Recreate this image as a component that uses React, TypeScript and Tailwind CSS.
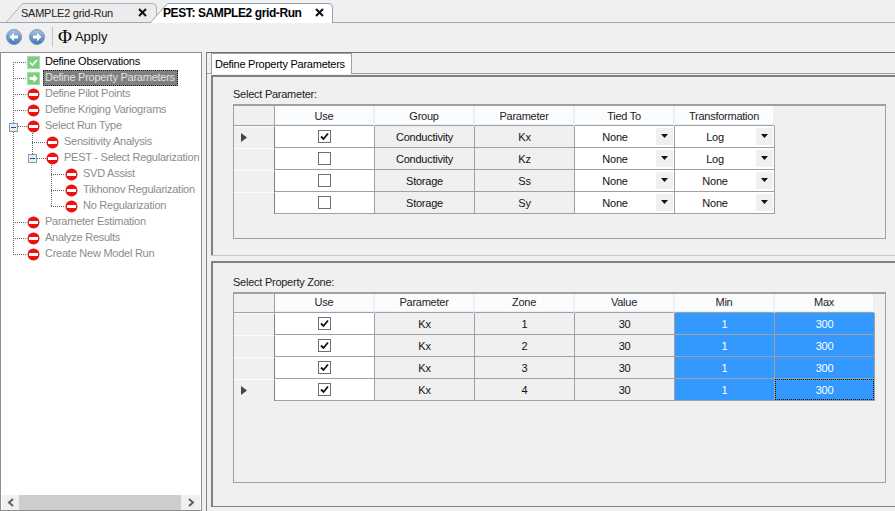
const font = "font-['Liberation_Sans',sans-serif]";

type TreeItem = { label: string; level: number; icon: "check" | "arrow" | "stop"; selected?: boolean; done?: boolean };

const treeItems: TreeItem[] = [
  { label: "Define Observations", level: 0, icon: "check", done: true },
  { label: "Define Property Parameters", level: 0, icon: "arrow", selected: true },
  { label: "Define Pilot Points", level: 0, icon: "stop" },
  { label: "Define Kriging Variograms", level: 0, icon: "stop" },
  { label: "Select Run Type", level: 0, icon: "stop" },
  { label: "Sensitivity Analysis", level: 1, icon: "stop" },
  { label: "PEST - Select Regularization", level: 1, icon: "stop" },
  { label: "SVD Assist", level: 2, icon: "stop" },
  { label: "Tikhonov Regularization", level: 2, icon: "stop" },
  { label: "No Regularization", level: 2, icon: "stop" },
  { label: "Parameter Estimation", level: 0, icon: "stop" },
  { label: "Analyze Results", level: 0, icon: "stop" },
  { label: "Create New Model Run", level: 0, icon: "stop" },
];

function TreeIcon({ kind }: { kind: TreeItem["icon"] }) {
  if (kind === "stop") {
    return (
      <svg width="13" height="13" viewBox="0 0 13 13" className="shrink-0">
        <circle cx="6.5" cy="6.5" r="6" fill="#ee1111" />
        <rect x="2" y="5" width="9" height="3" fill="#ffffff" />
      </svg>
    );
  }
  return (
    <svg width="13" height="13" viewBox="0 0 13 13" className="shrink-0">
      <rect x="0" y="0" width="13" height="13" fill="#79cf7d" />
      <rect x="0.5" y="0.5" width="12" height="12" fill="none" stroke="#a6e0a8" />
      {kind === "check" ? (
        <path d="M3 6.5 L5.5 9 L10 4" fill="none" stroke="#ffffff" strokeWidth="1.6" />
      ) : (
        <path d="M2.5 5 H6.5 V2.5 L10.8 6.5 L6.5 10.5 V8 H2.5 Z" fill="#ffffff" />
      )}
    </svg>
  );
}

function TreeLines() {
  // dotted connectors + expander boxes
  const dot = { stroke: "#666", strokeDasharray: "1 1", fill: "none" };
  const hLines = [
    [12, 61, 26], [12, 77, 26], [12, 93, 26], [12, 109, 26], [17, 125, 26],
    [31, 141, 45], [36, 157, 45], [50, 173, 64], [50, 189, 64], [50, 205, 64],
    [12, 221, 26], [12, 237, 26], [12, 253, 26],
  ];
  return (
    <svg width="90" height="270" viewBox="0 52 90 270" className="absolute left-0 top-0 pointer-events-none">
      <g {...dot}>
        <path d="M12.5 61 V253.5" />
        <path d="M31.5 130 V157" />
        <path d="M50.5 162 V205.5" />
        {hLines.map(([x1, y, x2]) => (
          <path key={`${x1}-${y}`} d={`M${x1} ${y + 0.5} H${x2}`} />
        ))}
      </g>
      {[[8, 122], [27, 153]].map(([x, y]) => (
        <g key={x}>
          <rect x={x + 0.5} y={y + 0.5} width="8" height="8" fill="#e8eef4" stroke="#8a9aa8" />
          <path d={`M${x + 2} ${y + 4.5} H${x + 7}`} stroke="#1f4e9c" />
        </g>
      ))}
    </svg>
  );
}

function Tree() {
  return (
    <div className="relative flex flex-col pt-[1px] flex-1 min-h-0 overflow-hidden">
      <TreeLines />
      {treeItems.map((item) => (
        <div
          key={item.label}
          className={`flex h-4 items-center shrink-0 ${
            item.level === 0 ? "pl-[26px]" : item.level === 1 ? "pl-[45px]" : "pl-[64px]"
          }`}
        >
          <TreeIcon kind={item.icon} />
          <span
            className={`ml-[3px] pl-[2px] pr-[3px] h-4 leading-[15px] whitespace-nowrap text-[11px] ${
              item.selected
                ? "bg-[#808080] text-[#e0e0e0] outline-1 outline-dotted outline-offset-[-1px] outline-[#222]"
                : item.done
                  ? "text-black"
                  : "text-[#8c8c8c]"
            }`}
          >
            {item.label}
          </span>
        </div>
      ))}
    </div>
  );
}

function ScrollBar() {
  return (
    <div className="flex h-[15px] bg-[#f0f0f0] items-stretch mx-[1px] shrink-0">
      <div className="w-[17px] flex items-center justify-center">
        <svg width="8" height="9" viewBox="0 0 8 9">
          <path d="M6 1 L2 4.5 L6 8" fill="none" stroke="#606060" strokeWidth="2" />
        </svg>
      </div>
      <div className="flex-1 bg-[#cdcdcd]" />
      <div className="w-[19px] flex items-center justify-center">
        <svg width="8" height="9" viewBox="0 0 8 9">
          <path d="M2 1 L6 4.5 L2 8" fill="none" stroke="#606060" strokeWidth="2" />
        </svg>
      </div>
    </div>
  );
}

function CloseX() {
  return (
    <svg width="9" height="9" viewBox="0 0 9 9" className="block">
      <path d="M1 1 L8 8 M8 1 L1 8" stroke="#111" strokeWidth="2" />
    </svg>
  );
}

function DocTabs() {
  return (
    <div className="relative h-[23px] shrink-0 bg-[#f0f0f0] border-b border-[#9aa7b5] flex">
      <div className="relative w-[157px] ml-[5px] h-[22px] shrink-0">
        <svg width="157" height="22" className="absolute left-0 top-0">
          <path d="M1.5 22 L17.5 3.5 H148 Q151 3.5 151.5 7 V22" fill="#ececec" stroke="#a9b4bf" />
        </svg>
        <span className="absolute left-[16px] top-[5px] text-[11px] leading-4 text-[#222] whitespace-nowrap">SAMPLE2 grid-Run</span>
        <span className="absolute left-[133px] top-[8px]"><CloseX /></span>
      </div>
      <div className="relative w-[185px] ml-[-13px] h-[23px] shrink-0">
        <svg width="185" height="23" className="absolute left-0 top-0">
          <path d="M1 23 L18.5 3.5 H179 Q183.5 3.5 183.5 8 V23" fill="#ffffff" stroke="#8ea3b6" />
        </svg>
        <span className="absolute left-[14px] top-[5px] text-[12px] leading-4 font-bold tracking-[-0.4px] text-black whitespace-nowrap">PEST: SAMPLE2 grid-Run</span>
        <span className="absolute left-[166px] top-[8px]"><CloseX /></span>
      </div>
    </div>
  );
}

function NavButton({ dir }: { dir: "back" | "next" }) {
  return (
    <svg width="16" height="16" viewBox="0 0 16 16" className="shrink-0 mt-[1px]">
      <defs>
        <linearGradient id={`nav-${dir}`} x1="0" y1="0" x2="0" y2="1">
          <stop offset="0" stopColor="#a9c6e6" />
          <stop offset="1" stopColor="#3f74b4" />
        </linearGradient>
      </defs>
      <circle cx="8" cy="8" r="7.5" fill={`url(#nav-${dir})`} stroke="#7f97b2" />
      {dir === "back" ? (
        <path d="M3.5 8 L8 3.8 V6.5 H12 V9.5 H8 V12.2 Z" fill="#ffffff" />
      ) : (
        <path d="M12.5 8 L8 3.8 V6.5 H4 V9.5 H8 V12.2 Z" fill="#ffffff" />
      )}
    </svg>
  );
}

function Toolbar() {
  return (
    <div className="h-[27px] shrink-0 flex items-center bg-[#f0f0f0] pl-[6px]">
      <NavButton dir="back" />
      <span className="w-[7px]" />
      <NavButton dir="next" />
      <span className="w-px h-[20px] bg-[#c4c4c4] ml-[7px] mr-[5px]" />
      <span className="font-['Liberation_Serif',serif] text-[19px] leading-none text-black tracking-normal">Φ</span>
      <span className="ml-[3px] text-[13px] tracking-normal text-[#111]">Apply</span>
    </div>
  );
}

function CheckBox({ on }: { on: boolean }) {
  return (
    <span className="flex w-[13px] h-[13px] bg-white border border-[#6f6f6f] items-center justify-center">
      {on && (
        <svg width="9" height="9" viewBox="0 0 9 9">
          <path d="M1 4.5 L3.5 7 L8 1.5" fill="none" stroke="#111" strokeWidth="1.8" />
        </svg>
      )}
    </span>
  );
}

function HeaderCell({ children, corner, low }: { children?: React.ReactNode; corner?: boolean; low?: boolean }) {
  return (
    <div
      className={`h-full flex items-center justify-center border-b border-b-[#a0a0a0] text-[11px] text-[#222] ${
        low ? "pt-[1px]" : "pb-[1px]"
      } ${
        corner
          ? "bg-[#f0f0f0] border-r border-r-[#a0a0a0]"
          : "bg-[#fbfcfe] border-r-2 border-r-[#e8f0fa] shadow-[inset_0_-1px_0_#e8f0fa]"
      }`}
    >
      {children}
    </div>
  );
}

function Cell({
  children,
  tone,
  focused,
}: {
  children?: React.ReactNode;
  tone: "white" | "gray" | "blue";
  focused?: boolean;
}) {
  const toneClass =
    tone === "white" ? "bg-white text-[#111]" : tone === "gray" ? "bg-[#f0f0f0] text-[#111] pt-[1px]" : "bg-[#3399ff] text-white pt-[1px]";
  return (
    <div className={`relative h-full flex items-center justify-center border-r border-b border-[#a0a0a0] text-[11px] ${toneClass}`}>
      {children}
      {focused && <span className="absolute inset-[0px] border border-dotted border-[#111]" />}
    </div>
  );
}

function ComboCell({ value }: { value: string }) {
  return (
    <div className="h-full flex items-center bg-white border-r border-b border-[#a0a0a0] text-[11px] text-[#111]">
      <span className="flex-1 text-center pr-[1px] pt-[2px]">{value}</span>
      <span className="w-[17px] h-[17px] mr-[1px] mb-[1px] bg-[#f0f0f0] flex items-center justify-center">
        <svg width="7" height="4" viewBox="0 0 7 4"><path d="M0 0 H7 L3.5 4 Z" fill="#111" /></svg>
      </span>
    </div>
  );
}

function RowHeader({ current }: { current?: boolean }) {
  return (
    <div className="h-full flex items-center pl-[7px] bg-[#f0f0f0] border-t border-t-[#fbfcfe] border-r border-r-[#808080]">
      {current && (
        <svg width="6" height="9" viewBox="0 0 6 9"><path d="M0 0 L6 4.5 L0 9 Z" fill="#444" /></svg>
      )}
    </div>
  );
}

function ParameterGrid() {
  const rows = [
    { use: true, group: "Conductivity", parameter: "Kx", tied: "None", transform: "Log" },
    { use: false, group: "Conductivity", parameter: "Kz", tied: "None", transform: "Log" },
    { use: false, group: "Storage", parameter: "Ss", tied: "None", transform: "None" },
    { use: false, group: "Storage", parameter: "Sy", tied: "None", transform: "None" },
  ];
  return (
    <div className="h-[135px] border border-[#a0a0a0] border-t-2 mr-[9px] bg-[#f0f0f0]">
      <div className="grid grid-cols-[41px_100px_100px_100px_100px_100px] grid-rows-[20px_22px_22px_22px_22px] w-fit">
        <HeaderCell corner />
        {["Use", "Group", "Parameter", "Tied To", "Transformation"].map((h) => (
          <HeaderCell key={h} low>{h}</HeaderCell>
        ))}
        {rows.map((r, i) => (
          <div key={r.parameter} className="contents">
            <RowHeader current={i === 0} />
            <Cell tone="white"><CheckBox on={r.use} /></Cell>
            <Cell tone="gray">{r.group}</Cell>
            <Cell tone="gray">{r.parameter}</Cell>
            <ComboCell value={r.tied} />
            <ComboCell value={r.transform} />
          </div>
        ))}
      </div>
    </div>
  );
}

function ZoneGrid() {
  const rows = ["1", "2", "3", "4"];
  return (
    <div className="h-[191px] border border-[#a0a0a0] border-t-2 mr-[9px] bg-[#f0f0f0]">
      <div className="grid grid-cols-[41px_100px_100px_100px_100px_100px_100px] grid-rows-[19px_22px_22px_22px_22px] w-fit">
        <HeaderCell corner />
        {["Use", "Parameter", "Zone", "Value", "Min", "Max"].map((h) => (
          <HeaderCell key={h}>{h}</HeaderCell>
        ))}
        {rows.map((zone, i) => (
          <div key={zone} className="contents">
            <RowHeader current={i === 3} />
            <Cell tone="white"><CheckBox on /></Cell>
            <Cell tone="gray">Kx</Cell>
            <Cell tone="gray">{zone}</Cell>
            <Cell tone="gray">30</Cell>
            <Cell tone="blue">1</Cell>
            <Cell tone="blue" focused={i === 3}>300</Cell>
          </div>
        ))}
      </div>
    </div>
  );
}

export default function App() {
  return (
    <div className={`${font} tracking-[-0.25px] w-[895px] h-[511px] overflow-hidden flex flex-col bg-[#f0f0f0]`}>
      <DocTabs />
      <Toolbar />
      <div className="flex-1 min-h-0 flex pt-[2px]">
        {/* left tree */}
        <div className="w-[202px] shrink-0 bg-white border border-[#8a8f96] flex flex-col">
          <Tree />
          <ScrollBar />
        </div>
        {/* right side */}
        <div className="flex-1 min-w-0 ml-[4px] flex flex-col border-t border-t-[#707070] border-l border-l-[#808080]">
          <div className="h-[21px] shrink-0 flex border-b border-[#a0a0a0] pl-[4px]">
            <div className="w-[141px] h-[21px] shrink-0 bg-white border border-[#a0a0a0] border-b-0 text-[11px] text-black flex items-center pl-[3px] whitespace-nowrap">
              Define Property Parameters
            </div>
          </div>
          <div className="flex-1 min-h-0 flex flex-col ml-[4px] mt-[1px] mb-[4px]">
            <div className="h-[180px] shrink-0 border-t-2 border-l-2 border-[#808080] pl-[20px] pt-[10px]">
              <div className="text-[11px] leading-[14px] text-[#222] mb-[3px]">Select Parameter:</div>
              <ParameterGrid />
            </div>
            <div className="h-[6px] shrink-0 border-t border-[#c8c8c8]" />
            <div className="flex-1 border-t-2 border-l-2 border-b border-[#808080] pl-[20px] pt-[12px]">
              <div className="text-[11px] leading-[14px] text-[#222] mb-[3px]">Select Property Zone:</div>
              <ZoneGrid />
            </div>
          </div>
        </div>
      </div>
    </div>
  );
}
